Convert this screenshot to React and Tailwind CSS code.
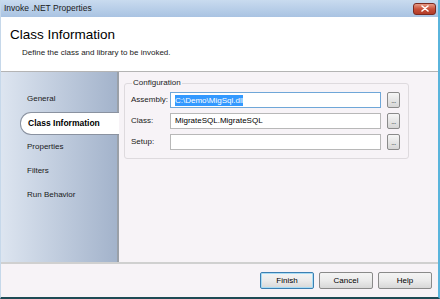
import React from 'react';

const navItems = ['General', 'Class Information', 'Properties', 'Filters', 'Run Behavior'];

const fields = [
  { label: 'Assembly:', value: 'C:\\Demo\\MigSql.dll', focused: true },
  { label: 'Class:', value: 'MigrateSQL.MigrateSQL' },
  { label: 'Setup:', value: '' },
];

const BrowseButton = () => (
  <div className="w-[13px] h-[16px] rounded-[2px] border border-[#8a8a8a] bg-gradient-to-b from-[#f6f6f6] to-[#d6d6d6] flex items-end justify-center pb-[4px]">
    <span className="text-[7px] leading-[4px] text-[#333] tracking-[-0.5px]">...</span>
  </div>
);

const DialogButton = ({ label, primary }) => (
  <div
    className={
      'w-[54px] h-[17px] rounded-[2px] border flex items-center justify-center text-[8px] text-black bg-gradient-to-b from-[#f4f4f4] via-[#ebebeb] to-[#d8d8d8] ' +
      (primary ? 'border-[#3c7fb1] shadow-[inset_0_0_0_1px_#a8dcf5]' : 'border-[#8a8a8a]')
    }
  >
    {label}
  </div>
);

export default function App() {
  return (
    <div
      className="w-[440px] h-[299px] flex flex-col bg-[#f7f3f7] border-l border-[#c6d8ea] border-r-2 border-r-[#5ab4dc] border-b-2 border-b-[#1e4a55] overflow-hidden"
      style={{ fontFamily: '"Liberation Sans", Arial, sans-serif' }}
    >
      {/* Title bar */}
      <div className="h-[17px] flex items-center justify-between pl-[3px] pr-[2px] bg-gradient-to-b from-[#c9dbef] to-[#a9c3e2]">
        <span className="text-[8.5px] text-[#1a1a1a]">Invoke .NET Properties</span>
        <div className="w-[23px] h-[12px] rounded-[3px] border border-[#7a2a20] bg-gradient-to-b from-[#e69a86] via-[#c8503a] to-[#b23c28] flex items-center justify-center">
          <svg width="8" height="7" viewBox="0 0 8 7">
            <path d="M1 1 L7 6 M7 1 L1 6" stroke="#fff" strokeWidth="1.6" strokeLinecap="round" />
          </svg>
        </div>
      </div>

      {/* Header */}
      <div className="h-[55px] bg-white border-b border-[#b4b4b4] pl-[9px] pt-[10px]">
        <div className="text-[13.5px] leading-[16px] text-black">Class Information</div>
        <div className="text-[8px] leading-[10px] text-[#222] pl-[12px] pt-[5px]">Define the class and library to be invoked.</div>
      </div>

      {/* Body */}
      <div className="flex-1 flex border-b-2 border-[#d0d0d0]">
        <div className="w-[118px] border-r-2 border-[#9aa0a8] bg-gradient-to-r from-[#dde5f0] to-[#a3b3cb] pt-[15px] flex flex-col">
          {navItems.map((item) => (
            <div key={item} className="h-[24px] flex items-center">
              {item === 'Class Information' ? (
                <div className="ml-[19px] -mr-[2px] flex-1 h-[23px] bg-white rounded-l-[11px] border border-r-0 border-[#8a92a0] flex items-center pl-[7px] text-[8.5px] font-bold text-black">
                  {item}
                </div>
              ) : (
                <span className="pl-[26px] text-[8px] text-[#1a1a1a]">{item}</span>
              )}
            </div>
          ))}
        </div>

        <div className="flex-1 pl-[5px] pt-[5px]">
          <fieldset className="w-[285px] h-[82px] border border-[#dedade] rounded-[3px] pl-[6px] pr-[8px]">
            <legend className="text-[8px] text-[#1a1a1a] px-[1px] ml-[1px]">Configuration</legend>
            <div className="flex flex-col gap-[5px] pt-[3px]">
              {fields.map((f) => (
                <div key={f.label} className="flex items-center h-[16px]">
                  <span className="w-[39px] text-[8px] text-[#1a1a1a]">{f.label}</span>
                  <div
                    className={
                      'w-[211px] h-[16px] bg-white border flex items-center pl-[4px] text-[8px] ' +
                      (f.focused ? 'border-[#6fa7d8]' : 'border-[#b8b8b8]')
                    }
                  >
                    {f.focused ? (
                      <span className="bg-[#3399ff] text-white leading-[11px]">{f.value}</span>
                    ) : (
                      <span className="text-black">{f.value}</span>
                    )}
                  </div>
                  <div className="ml-[6px]">
                    <BrowseButton />
                  </div>
                </div>
              ))}
            </div>
          </fieldset>
        </div>
      </div>

      {/* Footer */}
      <div className="h-[33px] flex items-center justify-end gap-[5px] pr-[6px]">
        <DialogButton label="Finish" primary />
        <DialogButton label="Cancel" />
        <DialogButton label="Help" />
      </div>
    </div>
  );
}
